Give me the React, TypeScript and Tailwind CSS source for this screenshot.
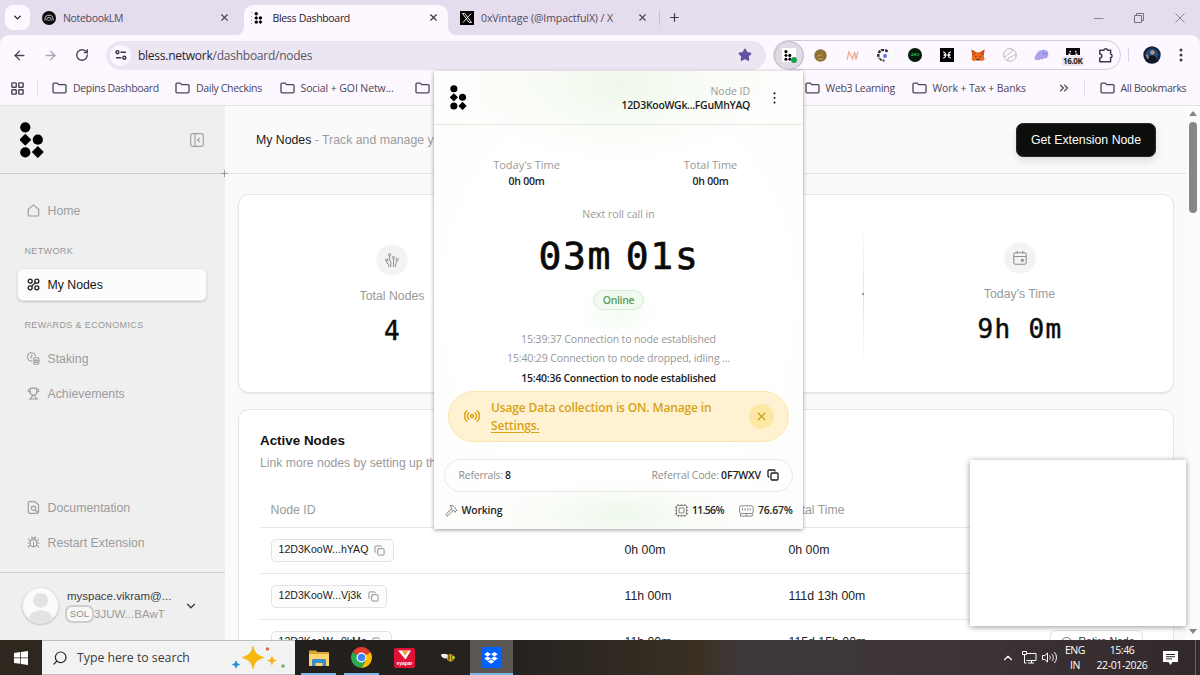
import React from 'react';
import {
  ArrowLeft, ArrowRight, Bug, ChevronDown, ChevronUp, ChevronsRight, Copy, Cpu, Hammer,
  LayoutGrid, Plus, Radio, RotateCw, Search, Star, Trophy, X,
} from 'lucide-react';

const BlessMark = ({ className }: { className: string }) => (
  <svg viewBox="0 0 24 36" className={className} fill="currentColor">
    <circle cx="5.3" cy="5.3" r="5.1" />
    <path d="M5.3 11.7l6 6-6 6-6-6z" />
    <circle cx="17.8" cy="17.7" r="5.1" />
    <circle cx="5.3" cy="30.3" r="5.1" />
    <path d="M17.8 24.1l6 6-6 6-6-6z" />
  </svg>
);

const Folder = () => (
  <svg viewBox="0 0 15 12" className="h-3 w-[15px] shrink-0" fill="none" stroke="#4a4555" strokeWidth="1.3">
    <path d="M1 2.2c0-.7.4-1.1 1-1.1h3.2l1.5 1.5H13c.6 0 1 .4 1 1v6.2c0 .6-.4 1-1 1H2c-.6 0-1-.4-1-1z" />
  </svg>
);

const chromeText = 'whitespace-nowrap text-[10.5px] tracking-[-0.32px]';

function Bookmark({ label, width }: { label: string; width: string }) {
  return (
    <div className={`flex shrink-0 items-center gap-[6px] ${width}`}>
      <Folder />
      <span className={`pt-px ${chromeText} text-[#4a4555]`}>{label}</span>
    </div>
  );
}

function TabStrip() {
  return (
    <div className="flex h-[35px] bg-[#e5dced]">
      <div className="ml-[5px] mt-[5px] flex h-[25px] w-[25px] items-center justify-center rounded-lg bg-[#fdf7ff]">
        <ChevronDown size={11} strokeWidth={3} color="#222" />
      </div>
      <div className="ml-3 flex w-[202px] items-center">
        <svg viewBox="0 0 14 14" className="h-[14px] w-[14px]">
          <circle cx="7" cy="7" r="7" fill="#0a0a0a" />
          <g fill="none" stroke="#ddd" strokeWidth="0.9">
            <path d="M3 9.5V8.2a4 4 0 018 0v1.3M4.8 9.5v-.9a2.2 2.2 0 014.4 0v.9M6.4 9.5a.6.6 0 011.2 0" />
          </g>
        </svg>
        <span className={`ml-[7px] w-[154px] pt-[2px] text-[#514b5c] ${chromeText}`}>NotebookLM</span>
        <X size={11} strokeWidth={2.4} color="#4b4655" className="ml-[2px]" />
      </div>
      <div className="relative mt-[5px] flex h-[30px] w-[204px] items-center rounded-t-[9px] bg-[#fdf7ff]">
        <svg viewBox="0 0 8 8" className="absolute -left-2 bottom-0 h-2 w-2"><path d="M8 0v8H0a8 8 0 008-8z" fill="#fdf7ff" /></svg>
        <svg viewBox="0 0 8 8" className="absolute -right-2 bottom-0 h-2 w-2"><path d="M0 0v8h8a8 8 0 01-8-8z" fill="#fdf7ff" /></svg>
        <svg viewBox="0 0 2 12" className="mb-[5px] ml-[7px] h-3 w-[2px]" fill="#999"><path d="M0 0h1v1H0zM0 4h1v1H0zM0 8h1v1H0zM0 11h1v1H0z" /></svg>
        <BlessMark className="mb-[5px] ml-[1px] h-[12px] w-[9px] text-black" />
        <span className={`mb-[3px] ml-[9.5px] w-[154px] text-[#1f1b24] ${chromeText}`}>Bless Dashboard</span>
        <X size={11} strokeWidth={2.4} color="#332e3b" className="mb-[5px] ml-[1px]" />
      </div>
      <div className="ml-3 flex items-center">
        <svg viewBox="0 0 14 14" className="h-[14px] w-[14px]">
          <rect width="14" height="14" fill="#000" />
          <path d="M2.5 2.5h2.3l6.700 9H9.200zM11 2.500L3 11.500" fill="none" stroke="#fff" strokeWidth="0.9" />
        </svg>
        <span className="ml-[7px] w-[156px] whitespace-nowrap pt-[2px] text-[10.5px] tracking-[-0.08px] text-[#514b5c]">0xVintage (@ImpactfulX) / X</span>
        <X size={11} strokeWidth={2.4} color="#4b4655" />
        <div className="ml-[11px] h-[14px] w-px bg-[#c6bdd0]" />
        <Plus size={13} strokeWidth={2.2} color="#3f3a49" className="ml-2" />
      </div>
      <div className="ml-auto flex items-center">
        <svg viewBox="0 0 10 10" className="h-[10px] w-[10px]"><path d="M0 5.5h9.500" stroke="#8c8396" /></svg>
        <svg viewBox="0 0 10 10" className="ml-[30px] h-[10px] w-[10px]" fill="none" stroke="#776f82"><path d="M.5 2.500h7v7h-7zM2.500 2.500v-2h7v7h-2" /></svg>
        <svg viewBox="0 0 10 10" className="ml-[31px] mr-[15px] h-[10px] w-[10px]"><path d="M.5.5l9 9M9.500.5l-9 9" stroke="#8c8396" /></svg>
      </div>
    </div>
  );
}

const Ext = ({ children }: { children: React.ReactNode }) => (
  <div className="flex h-[28px] w-[31.5px] shrink-0 items-center justify-center">{children}</div>
);

function Toolbar() {
  return (
    <div className="bg-[#e5dced]">
      <div className="flex h-[40px] items-center rounded-t-[9px] bg-[#fdf7ff]">
        <ArrowLeft size={15} strokeWidth={2.1} color="#4a4555" className="ml-[12px]" />
        <ArrowRight size={15} strokeWidth={2.1} color="#aaa3b3" className="ml-[16px]" />
        <RotateCw size={14} strokeWidth={2.4} color="#4a4555" className="ml-[17px]" />
        <div className="ml-[17px] flex h-[29px] w-[660px] items-center rounded-full bg-[#ece6f2]">
          <div className="ml-[4px] flex h-[21px] w-[21px] items-center justify-center rounded-full bg-[#fdf7ff]">
            <svg viewBox="0 0 12 10" className="h-[10px] w-3" fill="none" stroke="#3b3645" strokeWidth="1.4">
              <circle cx="2.400" cy="2.300" r="1.500" /><path d="M5.500 2.300H11M1 7.700h5.300" /><circle cx="9.300" cy="7.700" r="1.500" />
            </svg>
          </div>
          <span className="ml-[7px] flex-1 whitespace-nowrap pt-px text-[12px] tracking-[-0.25px] text-[#5a5466]"><span className="text-[#27222e]">bless.network</span>/dashboard/nodes</span>
          <Star size={14} fill="#6750a4" color="#6750a4" className="mr-[14px]" />
        </div>
        <div className="ml-[7px] flex h-[30px] w-[348px] items-center overflow-hidden rounded-full border border-[#d2cbda]">
          <div className="mr-px flex h-[29px] w-[30px] shrink-0 items-center justify-center rounded-full border border-[#bcb6c2] bg-[#dfdae3]">
            <div className="relative flex h-[14px] w-[14px] items-center bg-white pl-[2px]">
              <BlessMark className="h-[11px] w-[8px] text-black" />
              <div className="absolute -bottom-px -right-px h-[6px] w-[6px] rounded-full bg-[#18a04a]" />
            </div>
          </div>
          <Ext>
            <svg viewBox="0 0 13 13" className="h-[13px] w-[13px]"><circle cx="6.500" cy="6.500" r="6.200" fill="#8d7238" /><path d="M3 8l2-2 1.500 1L8.500 4.500M4 10h5" stroke="#c9a757" fill="none" /></svg>
          </Ext>
          <Ext>
            <svg viewBox="0 0 13 11" className="h-[11px] w-[13px]" fill="none" stroke="#f0ac8e" strokeWidth="1.300"><path d="M1 9.500L3 2l3.500 7L8.500 2l1.500 7.500L12 1.500" /></svg>
          </Ext>
          <Ext>
            <svg viewBox="0 0 13 13" className="h-[13px] w-[13px]"><path d="M10.500 2.700A5 5 0 102.500 9.500" fill="none" stroke="#26262b" strokeWidth="2.400" strokeDasharray="2.800 1" /><path d="M3 10a5 5 0 004.500 1.500" fill="none" stroke="#333" strokeWidth="2" strokeDasharray="2 1" /><circle cx="8" cy="7" r="1.900" fill="#4b6fe0" /></svg>
          </Ext>
          <Ext>
            <div className="flex h-[14px] w-[14px] items-center justify-center rounded-full bg-[#041b0a] text-[4px] font-bold text-[#2ba84a]">ARO</div>
          </Ext>
          <Ext>
            <svg viewBox="0 0 14 14" className="h-[14px] w-[14px]"><rect width="14" height="14" fill="#000" /><path d="M3 4c3 0 3.200 3 .5 3 2.700 0 2.500 3-.5 3M11 4c-3 0-3.200 3-.5 3-2.700 0-2.500 3 .5 3M4 7h6" fill="none" stroke="#fff" strokeWidth="1.200" /></svg>
          </Ext>
          <Ext>
            <svg viewBox="0 0 14 13" className="h-[13px] w-[14px]">
              <path d="M.5.5L5 3.300h4L13.500.5l-.8 6 .8 4-2.600 1.700-1.900-.9H5l-1.900.9L.5 10.500l.8-4z" fill="#ee6a1e" />
              <path d="M.5.5L5 3.300 4 6.500 1.300 6.500zM13.500.5L9 3.300l1 3.200 2.700 0z" fill="#d2501a" />
              <path d="M4 7l1.500.6L5 8.500zM10 7l-1.500.6.5.9z" fill="#222" /><path d="M5 11.200l.6-1.200h2.800l.6 1.200z" fill="#3a2a22" />
            </svg>
          </Ext>
          <Ext>
            <svg viewBox="0 0 14 14" className="h-[14px] w-[14px]" fill="none" stroke="#b9b5bf" strokeWidth="1"><circle cx="7" cy="7" r="6.300" /><path d="M1 8.500c2.500 0 3-1 4-2S8.500 5.500 9.500 1.500M4.500 12.500C5 10 6.500 9.500 8 9s2.500-2 5-2.500" /></svg>
          </Ext>
          <Ext>
            <svg viewBox="0 0 15 12" className="h-3 w-[15px]"><path d="M.5 9.500C2 4 5 .5 10 .8c4 .3 5 3 4 6.200-.8 2.500-2.500 3-3.500 2-1 1.500-2.500 1.800-3.500.8C5.500 11.500 3.500 11.800 3 10.500c-1 .8-2.500.5-2.500-1z" fill="#aca3ef" /><path d="M9.300 3.500v2M12 3.500v2" stroke="#6f64bd" strokeWidth="1" /></svg>
          </Ext>
          <Ext>
            <div className="flex flex-col items-center pt-[3px]">
              <svg viewBox="0 0 14 7" className="h-[7px] w-[14px]"><path d="M0 0h14v7h-2.500V5.500h-2V7h-5V5.500h-2V7H0z" fill="#0b0b0b" /><path d="M3.500 3h1.500v1.300H3.500zM9 3h1.500v1.300H9z" fill="#fff" /></svg>
              <span className="mt-px rounded-[2px] bg-[#ece6ee] px-px text-[8px] font-bold leading-[10px] tracking-[-0.35px] text-[#222]">16.0K</span>
            </div>
          </Ext>
          <Ext>
            <svg viewBox="0 0 16 16" className="ml-[3px] h-4 w-4" fill="none" stroke="#3e3948" strokeWidth="1.500" strokeLinejoin="round">
              <path d="M1.800 3.200h4.100a1.900 1.900 0 013.700 0h3v3.900a1.900 1.900 0 010 3.700v3.900H1.800v-3.700a2 2 0 000-4z" />
            </svg>
          </Ext>
        </div>
        <div className="ml-[7px] h-[14px] w-px bg-[#ddd0ea]" />
        <svg viewBox="0 0 18 18" className="ml-[14px] h-[18px] w-[18px]">
          <circle cx="9" cy="9" r="8.700" fill="#14213a" /><circle cx="9" cy="9" r="6.500" fill="#234a7c" />
          <circle cx="9.500" cy="6.500" r="2.300" fill="#b98f79" /><path d="M4.500 15c0-4 2-5.500 4.800-5.500S13.700 11 13.700 15c-2.500 2.500-6.500 2.500-9.200 0z" fill="#15161d" />
          <path d="M3.500 8.500l2 4" stroke="#b98f79" strokeWidth="1.500" />
        </svg>
        <svg viewBox="0 0 4 14" className="ml-[18px] h-[14px] w-1" fill="#3e3948"><circle cx="2" cy="2" r="1.500" /><circle cx="2" cy="7" r="1.500" /><circle cx="2" cy="12" r="1.500" /></svg>
      </div>
      <div className="flex h-[31px] items-center border-b border-[#e6dfea] bg-[#fdf7ff] pb-[4px]">
        <LayoutGrid size={15} strokeWidth={2.300} color="#4a4555" className="ml-[10px] mr-[12px]" />
        <div className="mr-[14px] h-[14px] w-px bg-[#e3d5f0]" />
        <Bookmark label="Depins Dashboard" width="w-[123px]" />
        <Bookmark label="Daily Checkins" width="w-[104.5px]" />
        <div className="flex w-[135px] shrink-0 items-center gap-[6px]">
          <Folder />
          <span className="whitespace-nowrap pt-px text-[10.5px] tracking-[-0.1px] text-[#4a4555]">Social + GOI Netw...</span>
        </div>
        <div className="w-[390px] shrink-0"><Folder /></div>
        <Bookmark label="Web3 Learning" width="w-[107px]" />
        <div className="flex w-[145px] shrink-0 items-center gap-[6px]">
          <Folder />
          <span className="whitespace-nowrap pt-px text-[10.5px] tracking-[-0.12px] text-[#4a4555]">Work + Tax + Banks</span>
        </div>
        <ChevronsRight size={14} strokeWidth={2.200} color="#4a4555" className="shrink-0" />
        <div className="ml-[13px] mr-[15px] h-[14px] w-px bg-[#e3d5f0]" />
        <Bookmark label="All Bookmarks" width="w-[90px]" />
      </div>
    </div>
  );
}

function NavRow({ icon, label, active }: { icon: React.ReactNode; label: string; active?: boolean }) {
  return (
    <div className={`mx-[17px] flex h-[33px] w-[190px] items-center gap-[8px] whitespace-nowrap rounded-[6px] border text-[12.300px] pl-[8.500px] ${active ? 'border-[#e6e6e6] bg-[#fcfcfc] text-[#161616] shadow-[0_1px_2px_rgba(0,0,0,0.18)]' : 'border-transparent text-[#9c9c9c]'}`}>
      {icon}<span className="pt-[2px]">{label}</span>
    </div>
  );
}

const NavLabel = ({ children }: { children: React.ReactNode }) => (
  <div className="ml-[24.500px] h-3 whitespace-nowrap text-[9px] leading-3 tracking-[0.360px] text-[#989898]">{children}</div>
);

const navSvg = 'h-[13px] w-[13px] shrink-0';

function Sidebar() {
  return (
    <aside className="relative flex w-[225px] shrink-0 flex-col bg-[#efefef]">
      <div className="flex h-[68px] shrink-0 items-center justify-between border-b border-[#cfcfcf] pl-[20px] pr-[21px]">
        <BlessMark className="h-[36px] w-[24px] text-black" />
        <svg viewBox="0 0 14 14" className="h-[14px] w-[14px]" fill="none" stroke="#a2a2a2" strokeWidth="1.200"><rect x="0.700" y="0.700" width="12.600" height="12.600" rx="1.800" /><path d="M5 .7v12.600M9.800 5L7.700 7l2.100 2" /></svg>
      </div>
      <svg viewBox="0 0 7 7" className="absolute -right-[3px] top-[64px] z-10 h-[7px] w-[7px]"><path d="M3.500 0v7M0 3.500h7" stroke="#9a9a9a" strokeWidth="1" /></svg>
      <div className="flex flex-1 flex-col pt-[20px]">
        <NavRow label="Home" icon={<svg viewBox="0 0 13 13" className={navSvg} fill="none" stroke="#a0a0a0" strokeWidth="1.200"><path d="M1.300 5.300L6.500.9l5.200 4.400v5.400c0 .8-.4 1.300-1.200 1.300h-8c-.8 0-1.200-.5-1.200-1.300z" strokeLinejoin="round" /></svg>} />
        <div className="h-[18px]" />
        <NavLabel>NETWORK</NavLabel>
        <div className="h-[11px]" />
        <NavRow active label="My Nodes" icon={<svg viewBox="0 0 13 13" className={navSvg} fill="none" stroke="#1d1d1d" strokeWidth="1.300"><circle cx="3.200" cy="3.200" r="2" /><circle cx="9.800" cy="3.200" r="2" /><circle cx="3.200" cy="9.800" r="2" /><circle cx="9.800" cy="9.800" r="2" /><path d="M8.400 4.600L4.600 8.400" /></svg>} />
        <div className="h-[18px]" />
        <NavLabel>REWARDS &amp; ECONOMICS</NavLabel>
        <div className="h-[11px]" />
        <NavRow label="Staking" icon={<svg viewBox="0 0 13 13" className={navSvg} fill="none" stroke="#a0a0a0" strokeWidth="1.100"><path d="M5.600 9A4.200 4.200 0 118.700 4.200M4.700 2.500v2.300L3.200 6" /><rect x="6.700" y="5.700" width="5" height="2.600" rx=".6" /><rect x="7.200" y="8.300" width="5" height="2" rx=".6" /><rect x="6.700" y="10.300" width="5" height="2" rx=".6" /></svg>} />
        <div className="h-[2px]" />
        <NavRow label="Achievements" icon={<Trophy size={13} strokeWidth={2} className="shrink-0" />} />
        <div className="flex-1" />
        <NavRow label="Documentation" icon={<svg viewBox="0 0 13 13" className={navSvg} fill="none" stroke="#a0a0a0" strokeWidth="1.200"><path d="M11 12.300H2.500c-.7 0-1.200-.5-1.200-1.200V1.900c0-.7.5-1.200 1.200-1.200H8l3.500 3.100v8" /><circle cx="6.500" cy="7.200" r="2.100" /><path d="M8 8.700l3.500 3.300" /></svg>} />
        <div className="h-[2px]" />
        <NavRow label="Restart Extension" icon={<Bug size={13} strokeWidth={1.900} className="shrink-0" />} />
        <div className="h-[13px]" />
      </div>
      <div className="flex h-[68px] shrink-0 items-center border-t border-[#d2d2d2] pb-[2px] pl-[22px]">
        <svg viewBox="0 0 37 37" className="h-[37px] w-[37px] rounded-full border border-[#e3e3e3] bg-[#fbfbfb] shadow-[0_1px_2px_rgba(0,0,0,0.2)]">
          <circle cx="18.500" cy="13" r="7.800" fill="#e3e3e3" /><ellipse cx="18.500" cy="33" rx="12.500" ry="9.500" fill="#e3e3e3" />
        </svg>
        <div className="ml-[6px] flex w-[114px] flex-col pb-px">
          <div className="ml-[2px] whitespace-nowrap text-[11.500px] leading-[18px] text-[#3d3d3d]">myspace.vikram@...</div>
          <div className="flex items-center text-[11.500px] leading-[18px] text-[#9c9c9c]">
            <span className="flex h-[18px] w-[29px] items-center justify-center rounded-[7px] border-2 border-[#cdcdcd] bg-[#f7f7f7] text-[9.700px] text-[#909090]">SOL</span>3JUW...BAwT
          </div>
        </div>
        <ChevronDown size={14} strokeWidth={2.200} color="#3d3d3d" className="ml-[4.500px]" />
      </div>
    </aside>
  );
}

function Stat({ icon, label, value }: { icon: React.ReactNode; label: string; value: string }) {
  return (
    <div className="flex flex-1 flex-col items-center">
      <div className="flex h-[32px] w-[32px] items-center justify-center rounded-full border border-[#f7f7f7] bg-[#f3f3f3]">{icon}</div>
      <div className="mt-[12px] whitespace-nowrap text-[12.300px] leading-[16px] text-[#9a9a9a]">{label}</div>
      <div className="mt-[11px] whitespace-pre pl-px font-['DejaVu_Sans_Mono'] text-[26px] leading-[32px] tracking-[1.300px] text-[#0c0c0c] [-webkit-text-stroke:0.5px_#0c0c0c]">{value}</div>
    </div>
  );
}

const rows = [
  { id: '12D3KooW...hYAQ', today: '0h 00m', total: '0h 00m' },
  { id: '12D3KooW...Vj3k', today: '11h 00m', total: '111d 13h 00m' },
  { id: '12D3KooW...9kMs', today: '11h 00m', total: '115d 15h 00m' },
];

function Main() {
  return (
    <main className="flex min-w-0 flex-1 flex-col overflow-hidden bg-[#fafafa]">
      <div className="flex h-[68px] shrink-0 items-center border-b border-[#e4e4e4] pl-[31px] pr-[30px] text-[12.300px]">
        <span className="whitespace-nowrap pt-[2px] text-[#9c9c9c]"><span className="text-[#1a1a1a]">My Nodes</span> - Track and manage your nodes</span>
        <div className="ml-auto flex h-[34px] w-[140px] items-center justify-center rounded-[7px] border border-[#2a2a2a] bg-[#0c0e0b] pt-px text-white shadow-[0_4px_8px_rgba(0,0,0,0.12)]">Get Extension Node</div>
      </div>
      <div className="ml-[13px] mt-[20px] flex h-[199px] w-[936px] shrink-0 rounded-[11px] border border-[#e6e6e6] bg-white shadow-[0_1px_1px_rgba(0,0,0,0.08)]">
        <div className="flex w-[312px] pr-[6px] pt-[49px]">
          <Stat label="Total Nodes" value="4" icon={
            <svg viewBox="0 0 14 14" className="h-[14px] w-[14px]" fill="none" stroke="#909090" strokeWidth="1"><circle cx="1.800" cy="7" r="1.200" /><circle cx="4.600" cy="1.800" r="1.200" /><circle cx="8.500" cy="4.600" r="1.200" /><circle cx="12.200" cy="6.500" r="1.200" /><path d="M1.800 8.200V10l2 1.500V14M4.600 3v4l1.200 2v5M8.500 5.800V14M12.200 7.700l-1.400 3-.3 3.300" /></svg>
          } />
        </div>
        <div className="relative flex-1">
          <div className="absolute -right-px top-[26px] h-[146px] w-px bg-[linear-gradient(transparent,#e2e2e2_50%,transparent)]" />
          <div className="absolute -right-px top-[98px] h-[2px] w-[2px] bg-[#999]" />
        </div>
        <div className="flex w-[310px] pl-[3px] pt-[47px]">
          <Stat label="Today's Time" value="9h 0m" icon={
            <svg viewBox="0 0 14 14" className="h-[14px] w-[14px]" fill="none" stroke="#909090" strokeWidth="1.100"><rect x=".8" y="1.800" width="12.400" height="11.400" rx="1.800" /><path d="M.8 5.500h12.400M4.200 0v2.500M9.800 0v2.500" /><path d="M8.500 8.500h1.600v1.600H8.500z" fill="#909090" /></svg>
          } />
        </div>
      </div>
      <div className="ml-[13px] mt-[16px] h-[300px] w-[936px] shrink-0 rounded-[11px] border border-[#e6e6e6] bg-white px-[21px] pt-[21px]">
        <div className="text-[13.400px] font-bold leading-[20px] text-[#101010]">Active Nodes</div>
        <div className="mt-[2px] text-[12.200px] leading-[20px] text-[#9a9a9a]">Link more nodes by setting up the extension</div>
        <div className="mt-[19px] flex h-[36px] items-center border-b border-[#e6e6e6] pl-[10.500px] pt-[2px] text-[12.300px] text-[#9a9a9a]">
          <div className="w-[354px]">Node ID</div><div className="w-[164px]">Today&apos;s Time</div><div>Total Time</div>
        </div>
        {rows.map((r) => (
          <div key={r.id} className="flex h-[46px] items-center border-b border-[#e6e6e6] pb-px pl-[10.500px] text-[12.300px] text-[#222]">
            <div className="flex w-[354px]">
              <div className="flex h-[23px] items-center gap-[6px] rounded-[5px] border border-[#e2e2e2] bg-[#fcfcfc] pl-[7px] pr-[7.500px] text-[10.600px]">
                {r.id}<Copy size={11} strokeWidth={2.100} color="#8e8e8e" />
              </div>
            </div>
            <div className="w-[164px] pt-px">{r.today}</div>
            <div className="w-[261px] pt-px">{r.total}</div>
            <div className="flex h-[24px] w-[93px] items-center gap-[7px] rounded-[6px] border border-[#e2e2e2] bg-white pl-[10px] text-[10.500px] text-[#333]">
              <svg viewBox="0 0 11 11" className="h-[11px] w-[11px]" fill="none" stroke="#777"><circle cx="5.500" cy="5.500" r="5" /><path d="M3.500 5.500l2 2 2-2" /></svg>Retire Node
            </div>
          </div>
        ))}
      </div>
    </main>
  );
}

function Scrollbar() {
  return (
    <div className="flex w-[14px] shrink-0 flex-col items-center justify-between bg-[#fcfcfc]">
      <div className="flex flex-col items-center pt-[5px]">
        <svg viewBox="0 0 8 5" className="h-[5px] w-2"><path d="M4 0l4 5H0z" fill="#858585" /></svg>
        <div className="mt-[6px] h-[91px] w-2 rounded-full bg-[#878787]" />
      </div>
      <svg viewBox="0 0 8 5" className="mb-[6px] h-[5px] w-2"><path d="M4 5l4-5H0z" fill="#858585" /></svg>
    </div>
  );
}

function Popup() {
  return (
    <div className="absolute left-[434px] top-[71px] z-20 flex h-[458px] w-[369px] flex-col bg-[#fffffe] bg-[radial-gradient(ellipse_150px_80px_at_50%_3%,#eff7ea_0%,rgba(244,250,240,0.6)_50%,rgba(255,255,255,0)_100%),radial-gradient(ellipse_120px_45px_at_50%_97%,#eef8ec_0%,rgba(244,250,241,0.6)_50%,rgba(255,255,255,0)_100%),radial-gradient(ellipse_190px_225px_at_50%_50%,#ffffff_85%,#fdfdfb_115%)] text-[10.500px] shadow-[0_1px_4px_rgba(0,0,0,0.4)]">
      <div className="flex h-[54px] shrink-0 items-center border-b border-[#e4e6e2] pl-[16px]">
        <BlessMark className="h-[25px] w-[17px] text-black" />
        <div className="ml-auto flex flex-col items-end whitespace-nowrap">
          <div className="leading-[14px] tracking-[-0.050px] text-[#9a9a9a]">Node ID</div>
          <div className="font-semibold leading-[14px] tracking-[-0.310px] text-[#1b1b1b]">12D3KooWGk...FGuMhYAQ</div>
        </div>
        <svg viewBox="0 0 3 13" className="ml-[23px] mr-[27px] h-[12px] w-[3px]" fill="#1b1b1b"><circle cx="1.500" cy="1.500" r="1.100" /><circle cx="1.500" cy="6.500" r="1.100" /><circle cx="1.500" cy="11.500" r="1.100" /></svg>
      </div>
      <div className="flex flex-1 flex-col items-center">
        <div className="mt-[32px] flex w-[369px] justify-center gap-[84px] text-center">
          {["Today's Time", 'Total Time'].map((t) => (
            <div key={t} className="w-[100px]">
              <div className="text-[11px] leading-[16px] text-[#999]">{t}</div>
              <div className="font-semibold leading-[17px] tracking-[-0.230px] text-[#222]">0h 00m</div>
            </div>
          ))}
        </div>
        <div className="mt-[15px] leading-[18px] text-[#999]">Next roll call in</div>
        <div className="mt-[9px] whitespace-pre pl-px font-['DejaVu_Sans_Mono'] text-[38px] leading-[48px] tracking-[1.700px] text-[#0a0a0a] [-webkit-text-stroke:0.7px_#0a0a0a] [word-spacing:-11px]">03m 01s</div>
        <div className="mt-[10px] flex h-[20px] w-[51px] items-center justify-center rounded-full border border-[#d9ecd8] bg-[#f0faef] pt-px font-semibold tracking-[-0.350px] text-[#5c9c5d] shadow-[0_12px_20px_rgba(170,230,170,0.170)]">Online</div>
        <div className="mt-[20px] whitespace-nowrap text-center leading-[19.300px] tracking-[-0.120px] text-[#969696]">
          <div>15:39:37 Connection to node established</div>
          <div>15:40:29 Connection to node dropped, idling ...</div>
          <div className="font-semibold tracking-[-0.270px] text-[#1d1d1d]">15:40:36 Connection to node established</div>
        </div>
        <div className="mt-[3px] flex h-[51px] w-[341px] shrink-0 items-center rounded-full border border-[#fbe6ae] bg-[#fef2d3]">
          <Radio size={18} strokeWidth={2} color="#d9a514" className="ml-[14px]" />
          <div className="ml-[10px] w-[240px] pt-px text-[12px] font-semibold leading-[17.500px] tracking-[-0.140px] text-[#d8a311]">Usage Data collection is ON. Manage in <span className="underline underline-offset-2">Settings.</span></div>
          <div className="ml-[18px] flex h-[25px] w-[25px] items-center justify-center rounded-full bg-[#fde7a3]"><X size={13} strokeWidth={2} color="#c79410" /></div>
        </div>
        <div className="mt-[17px] flex h-[33px] w-[349px] shrink-0 items-center whitespace-nowrap rounded-full border border-[#e7e9e4] bg-white/60 pl-[13.500px] pr-[13px]">
          <span className="pt-px tracking-[-0.220px] text-[#8f8f8f]">Referrals:</span><span className="ml-[2px] pt-px font-semibold text-[#1d1d1d]">8</span>
          <span className="ml-auto pt-px tracking-[-0.150px] text-[#8f8f8f]">Referral Code:</span><span className="ml-[2px] pt-px font-semibold tracking-[-0.100px] text-[#1d1d1d]">0F7WXV</span>
          <Copy size={12} strokeWidth={2.600} color="#1d1d1d" className="ml-[6px]" />
        </div>
        <div className="mt-[10px] flex h-[18px] w-[348px] items-center whitespace-nowrap font-semibold text-[#262626]">
          <Hammer size={13} strokeWidth={1.800} color="#777" />
          <span className="ml-[4px] tracking-[-0.200px]">Working</span>
          <Cpu size={15} strokeWidth={1.700} color="#8a8a8a" className="ml-auto" />
          <span className="ml-[3px] w-[33px] tracking-[-0.700px]">11.56%</span>
          <svg viewBox="0 0 15 12" className="ml-[14px] h-3 w-[15px]" fill="none" stroke="#8a8a8a"><rect x=".6" y=".8" width="13.600" height="7.700" rx="1.600" /><path d="M1.500 8.500v2.600h11.800V8.500M3.500 3.200v2.400M6 3.200v2.400M8.700 3.200v2.400M11.200 3.200v2.400M7.400 9v2" /></svg>
          <span className="ml-[4px] tracking-[-0.250px]">76.67%</span>
        </div>
      </div>
    </div>
  );
}

const TaskCell = ({ children, open, active }: { children: React.ReactNode; open?: boolean; active?: boolean }) => (
  <div className={`relative flex h-full w-[43.200px] shrink-0 items-center justify-center ${active ? 'bg-[#5b5652]' : ''}`}>
    {children}
    {open && <div className={`absolute bottom-0 h-[2px] bg-[#7ab8ec] ${active ? 'inset-x-0' : 'inset-x-[4px]'}`} />}
  </div>
);

function Taskbar() {
  return (
    <div className="flex h-[35px] shrink-0 items-center bg-[linear-gradient(90deg,#2f281f_0px,#221f1c_300px,#262220_520px,#3a3023_700px,#3d383c_740px,#3d3439_950px,#33292a_1200px)] text-white">
      <div className="flex h-full w-[42px] shrink-0 items-center justify-center">
        <svg viewBox="0 0 14 14" className="h-[14px] w-[14px]" fill="#fff"><path d="M0 2l6.300-.9v5.500H0zM7 1l7-1v6.600H7zM0 7.300h6.300v5.500L0 12zM7 7.300h7V14l-7-1z" /></svg>
      </div>
      <div className="flex h-full w-[253px] shrink-0 items-center border-y border-[#bdbdbd] bg-[#f2f2f2]">
        <Search size={16} strokeWidth={1.800} color="#2b2b2b" className="ml-[10px]  scale-x-[-1]" />
        <span className="ml-[9px] w-[153px] pt-[2px] text-[12.300px] tracking-[-0.020px] text-[#3c3c3c]">Type here to search</span>
        <svg viewBox="0 0 56 26" className="h-[26px] w-[56px]">
          <path d="M23 1.500c1.500 6.500 3.500 8.500 10.500 11-7 2.500-9 4.500-10.500 11-1.500-6.500-3.500-8.500-10.500-11 7-2.500 9-4.500 10.500-11z" fill="#f8b90e" stroke="#f8b90e" strokeWidth="1" strokeLinejoin="round" />
          <path d="M42 10c.8 3.500 1.800 4.500 5 5.500-3.200 1-4.200 2-5 5.500-.8-3.500-1.800-4.500-5-5.500 3.200-1 4.200-2 5-5.500z" fill="#f9b42c" />
          <path d="M6 16c.6 2.200 1.300 3 3.500 3.500-2.200.6-3 1.300-3.500 3.500-.6-2.200-1.300-3-3.500-3.500 2.200-.6 3-1.300 3.500-3.500z" fill="#1c94d8" stroke="#1c94d8" />
          <circle cx="37.500" cy="4" r="1.700" fill="#e0634a" /><circle cx="53" cy="21" r="1.700" fill="#6fae58" />
        </svg>
      </div>
      <div className="ml-[2px] flex h-full">
        <TaskCell open>
          <svg viewBox="0 0 20 18" className="h-[18px] w-[20px]"><path d="M0 1.500h7l1.500 1.500H20v14H0z" fill="#dca534" /><path d="M0 5h20v12H0z" fill="#fcd56c" /><path d="M3 17V11.500c0-1 .6-1.500 1.500-1.500h11c.9 0 1.500.5 1.500 1.500V17h-3.500v-3h-7v3z" fill="#3b8dcc" /></svg>
        </TaskCell>
        <TaskCell open>
          <svg viewBox="0 0 22 22" className="h-[21px] w-[21px]"><path d="M11 11L1.500 5.500A11 11 0 0120.500 5.500z" fill="#e33b2e" /><path d="M11 11L1.500 5.500A11 11 0 0011 22l4.500-8z" fill="#2da94f" /><path d="M11 11l9.500-5.500A11 11 0 0111 22l4.500-8z" fill="#fdbd00" /><circle cx="11" cy="11" r="5.200" fill="#fff" /><circle cx="11" cy="11" r="4" fill="#4285f4" /></svg>
        </TaskCell>
        <TaskCell>
          <svg viewBox="0 0 21 20" className="h-[20px] w-[21px]"><rect width="21" height="20" rx="2" fill="#df1236" /><path d="M4 2.500h13l-5.500 9z" fill="#fff" /><path d="M8 3h6l-3 5z" fill="#f5a02c" /><text x="10.500" y="17" fontSize="5" fontWeight="bold" textAnchor="middle" fill="#fff" fontFamily="Liberation Sans">vyapar</text></svg>
        </TaskCell>
        <TaskCell>
          <svg viewBox="0 0 16 9" className="h-[9px] w-4"><path d="M1 1.500c3-1.500 6-1 8 1.500L6 5.500C3.500 5.500 1 4 1 1.500z" fill="#f1f1f1" /><circle cx="10.500" cy="4.800" r="3.600" fill="#e6b820" /><path d="M9 2v5.500M12 2v5.500" stroke="#3c3311" strokeWidth="1.200" /><circle cx="13.500" cy="4.500" r="1.500" fill="#b6d832" /></svg>
        </TaskCell>
        <TaskCell open active>
          <div className="flex h-[21px] w-[21px] items-center justify-center bg-[#0061fe]">
            <svg viewBox="0 0 14 12" className="h-3 w-[14px]" fill="#fff"><path d="M3.600 0L7 2.200 3.600 4.400.2 2.200zM10.400 0l3.400 2.200-3.400 2.200L7 2.200zM.2 6.600l3.400-2.200L7 6.600 3.600 8.800zM10.400 4.400l3.400 2.200-3.400 2.200L7 6.600zM3.600 9.600L7 7.400l3.400 2.200L7 11.800z" /></svg>
          </div>
        </TaskCell>
      </div>
      <div className="ml-auto flex h-full items-center whitespace-nowrap text-center text-[10.500px] leading-[15px] tracking-[-0.380px]">
        <ChevronUp size={14} strokeWidth={1.900} />
        <svg viewBox="0 0 15 13" className="ml-[7px] h-[13px] w-[15px]" fill="none" stroke="#fff"><path d="M5 2.500h9v7H4.500M9.500 9.500v2.500M6 12h6M.5.5h4v3h-4zM2.500 3.500V12h2" /></svg>
        <svg viewBox="0 0 16 13" className="ml-[5px] h-[13px] w-4" fill="none" stroke="#fff"><path d="M.5 4.500h2.300L5.500 2v9L2.800 8.500H.5zM7.500 4.500c1 1 1 3 0 4M9.800 2.800c2 2 2 5.400 0 7.400M12.200 1c3 3 3 8 0 11" /></svg>
        <div className="ml-[5px] w-[24px]"><div>ENG</div><div>IN</div></div>
        <div className="ml-[8px] w-[54px]"><div className="tracking-[-0.500px]">15:46</div><div>22-01-2026</div></div>
        <svg viewBox="0 0 15 14" className="ml-[14px] h-[14px] w-[15px]"><path d="M0 0h15v11H9.500L7.500 14l-2-3H0z" fill="#fff" /><path d="M3 3.500h9M3 5.700h9M3 7.900h6" stroke="#33292a" /></svg>
        <div className="ml-[17px] mr-[4px] h-full w-px bg-[#6a6163]" />
      </div>
    </div>
  );
}

export default function App() {
  return (
    <div className="relative flex h-[675px] w-[1200px] flex-col overflow-hidden bg-white font-['Open_Sans','Noto_Sans',sans-serif]">
      <TabStrip />
      <Toolbar />
      <div className="flex min-h-0 flex-1 font-['Liberation_Sans',Arial,sans-serif]">
        <Sidebar />
        <Main />
        <Scrollbar />
      </div>
      <Taskbar />
      <Popup />
      <div className="absolute left-[970px] top-[460px] z-20 h-[166px] w-[216px] bg-white shadow-[0_1px_6px_rgba(0,0,0,0.4)]" />
    </div>
  );
}
